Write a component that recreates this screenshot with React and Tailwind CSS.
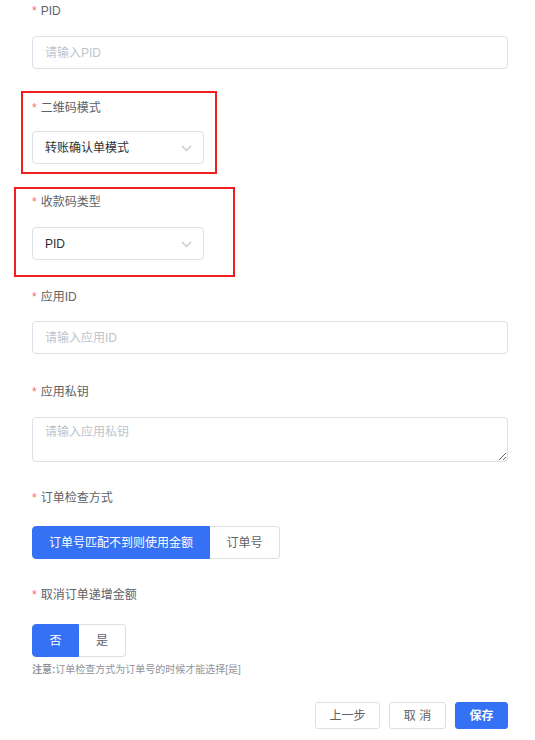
import React, { useState } from "react";

const FONT = { fontFamily: '"Liberation Sans", "Noto Sans CJK SC", sans-serif' };

function Label({ children, className = "" }) {
  return (
    <div className={`h-[20px] flex items-center text-[12px] text-[#606266] ${className}`}>
      <span className="text-[#f56c6c] mr-[4px]">*</span>
      {children}
    </div>
  );
}

function TextInput({ placeholder, className = "" }) {
  return (
    <input
      placeholder={placeholder}
      className={`block w-full h-[33px] px-[12px] text-[12px] text-[#303133] border border-[#dcdfe6] rounded-[4px] bg-white outline-none placeholder:text-[#c0c4cc] ${className}`}
    />
  );
}

function Select({ value, className = "" }) {
  return (
    <div
      className={`flex items-center justify-between w-[172px] h-[33px] pl-[12px] pr-[11px] text-[12px] text-[#303133] border border-[#dcdfe6] rounded-[4px] bg-white ${className}`}
    >
      <span>{value}</span>
      <svg width="11" height="7" viewBox="0 0 11 7" fill="none" className="mt-[1px]">
        <polyline points="1,1 5.5,5.5 10,1" stroke="#c0c4cc" strokeWidth="1.1" />
      </svg>
    </div>
  );
}

function Segmented({ options, active, onChange, className = "" }) {
  return (
    <div className={`flex h-[33px] ${className}`}>
      {options.map((o, i) => {
        const on = active === o.value;
        return (
          <button
            key={o.value}
            onClick={() => onChange(o.value)}
            className={`h-full text-[12px] ${o.width} ${
              i === 0 ? "rounded-l-[4px]" : "rounded-r-[4px]"
            } ${
              on
                ? "bg-[#3471f5] text-white border border-[#3471f5]"
                : "bg-white text-[#606266] border border-[#dcdfe6]"
            } ${i > 0 ? "border-l-0" : ""}`}
          >
            {o.label}
          </button>
        );
      })}
    </div>
  );
}

export default function App() {
  const [checkMode, setCheckMode] = useState("amount");
  const [increase, setIncrease] = useState("no");

  return (
    <div className="relative w-[535px] h-[740px] bg-white overflow-hidden" style={FONT}>
      <div className="pl-[32px] pr-[27px] pt-[1px]">
        <Label>PID</Label>
        <TextInput placeholder="请输入PID" className="mt-[15px]" />

        <Label className="mt-[29px]">二维码模式</Label>
        <Select value="转账确认单模式" className="mt-[13px]" />

        <Label className="mt-[28px]">收款码类型</Label>
        <Select value="PID" className="mt-[15px]" />

        <Label className="mt-[27px]">应用ID</Label>
        <TextInput placeholder="请输入应用ID" className="mt-[14px]" />

        <Label className="mt-[28px]">应用私钥</Label>
        <textarea
          placeholder="请输入应用私钥"
          className="block w-full h-[45px] mt-[15px] px-[12px] py-[5px] text-[12px] leading-[18px] text-[#303133] border border-[#dcdfe6] rounded-[4px] outline-none placeholder:text-[#c0c4cc]"
        />

        <Label className="mt-[26px]">订单检查方式</Label>
        <Segmented
          className="mt-[18px]"
          active={checkMode}
          onChange={setCheckMode}
          options={[
            { value: "amount", label: "订单号匹配不到则使用金额", width: "w-[178px]" },
            { value: "order", label: "订单号", width: "w-[70px]" },
          ]}
        />

        <Label className="mt-[26px]">取消订单递增金额</Label>
        <Segmented
          className="mt-[19px]"
          active={increase}
          onChange={setIncrease}
          options={[
            { value: "no", label: "否", width: "w-[47px]" },
            { value: "yes", label: "是", width: "w-[47px]" },
          ]}
        />
        <div className="mt-[6px] text-[10px] leading-[14px] text-[#909399]">
          <span className="font-bold">注意:</span>订单检查方式为订单号的时候才能选择[是]
        </div>

        <div className="mt-[25px] flex justify-end gap-[9px]">
          <button className="w-[65px] h-[27px] text-[12px] text-[#606266] bg-white border border-[#dcdfe6] rounded-[3px]">
            上一步
          </button>
          <button className="w-[57px] h-[27px] text-[12px] text-[#606266] bg-white border border-[#dcdfe6] rounded-[3px]">
            取 消
          </button>
          <button className="w-[53px] h-[27px] text-[12px] font-bold text-white bg-[#3471f5] border border-[#3471f5] rounded-[3px]">
            保存
          </button>
        </div>
      </div>

      {/* annotation boxes */}
      <div className="absolute left-[21px] top-[91px] w-[196px] h-[83px] border-2 border-[#f01e1e] pointer-events-none" />
      <div className="absolute left-[14px] top-[187px] w-[221px] h-[90px] border-2 border-[#f01e1e] pointer-events-none" />
    </div>
  );
}
